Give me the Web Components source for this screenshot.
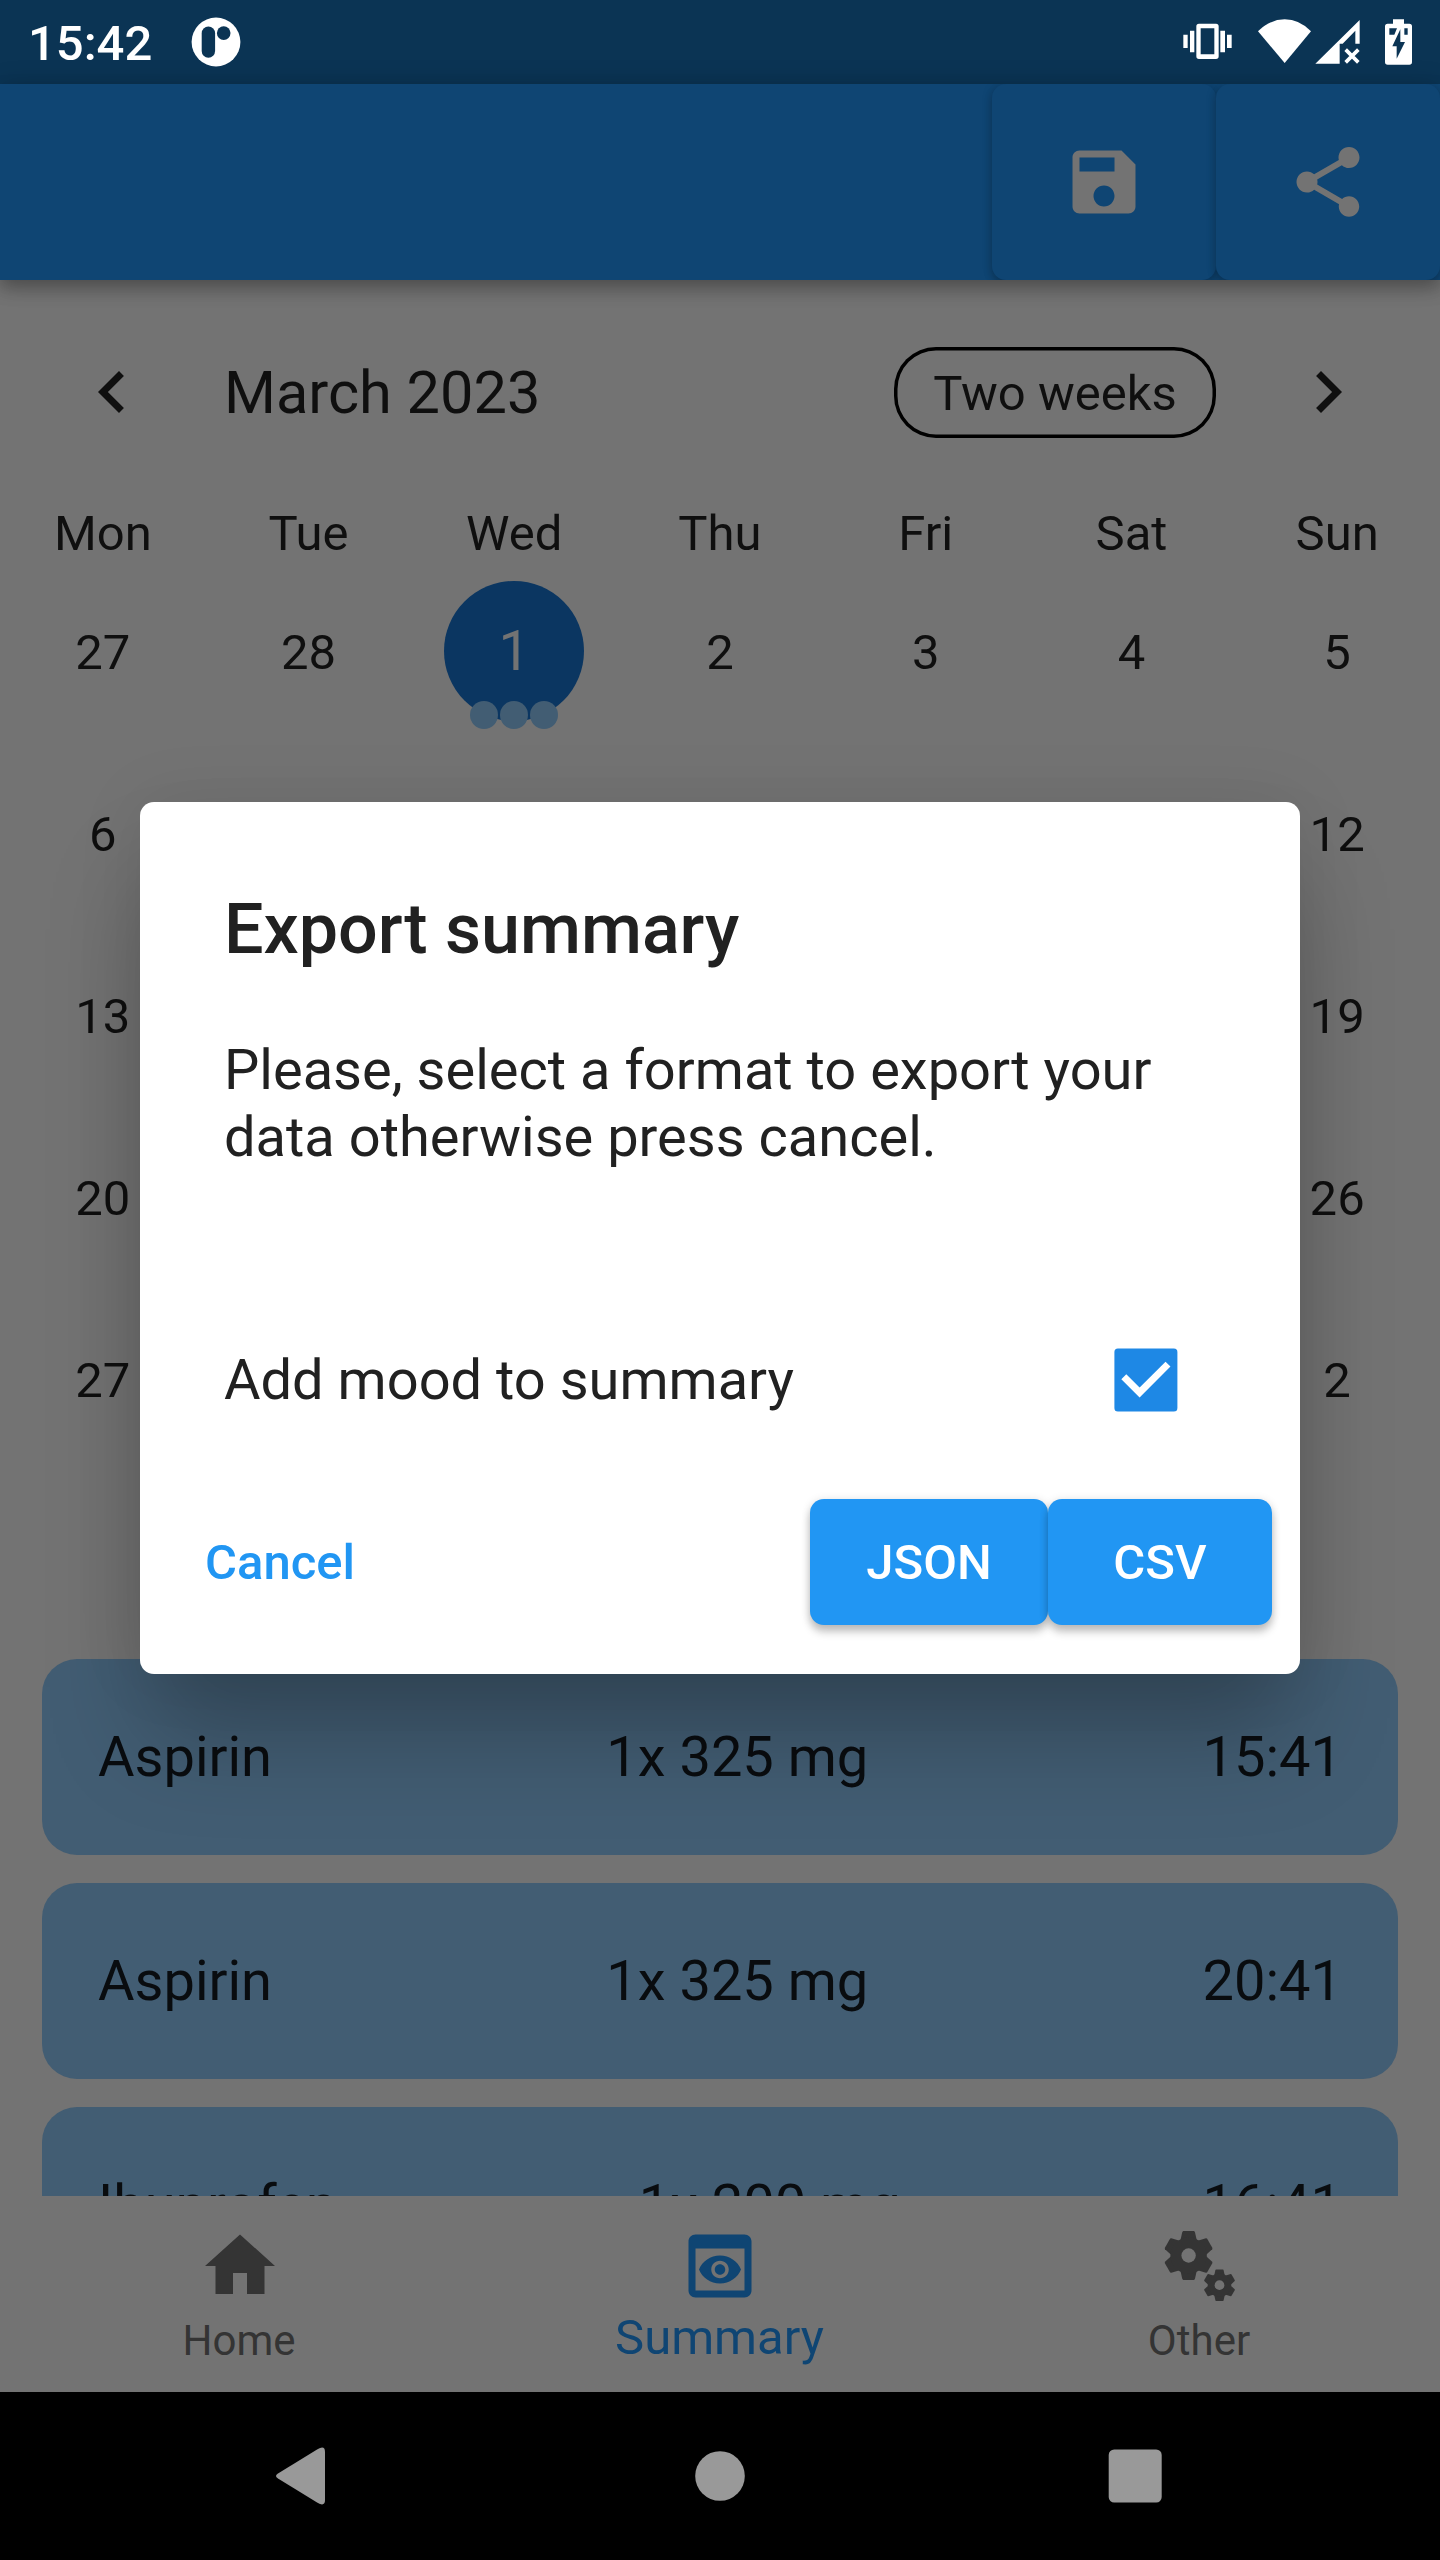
<!DOCTYPE html>
<html lang="en">
<head>
<meta charset="utf-8">
<title>Export summary</title>
<style>
  html, body { margin: 0; background: #000; }
  body { width: 1440px; height: 2560px; overflow: hidden; font-family: Roboto, sans-serif; }
</style>
</head>
<body>
<med-app></med-app>
<script>
const define = (name, html, setup) => customElements.define(name, class extends HTMLElement {
  constructor() {
    super();
    this.attachShadow({ mode: 'open' });
  }
  connectedCallback() {
    this.shadowRoot.innerHTML = typeof html === 'function' ? html(this) : html;
    if (setup) setup(this);
  }
});

// Material glyphs on a 24-unit grid
const ICONS = {
  save: '<path d="M17 3H5c-1.11 0-2 .9-2 2v14c0 1.1.89 2 2 2h14c1.1 0 2-.9 2-2V7l-4-4zm-5 16c-1.66 0-3-1.34-3-3s1.34-3 3-3 3 1.34 3 3-1.34 3-3 3zm3-10H5V5h10v4z"/>',
  share: '<path d="M18 16.08c-.76 0-1.44.3-1.96.77L8.91 12.7c.05-.23.09-.46.09-.7s-.04-.47-.09-.7l7.05-4.11c.54.5 1.25.81 2.04.81 1.66 0 3-1.34 3-3s-1.34-3-3-3-3 1.34-3 3c0 .24.04.47.09.7L8.04 9.81C7.5 9.31 6.79 9 6 9c-1.66 0-3 1.34-3 3s1.34 3 3 3c.79 0 1.5-.31 2.04-.81l7.12 4.16c-.05.21-.08.43-.08.65 0 1.61 1.31 2.92 2.92 2.92s2.92-1.31 2.92-2.92-1.31-2.92-2.92-2.92z"/>',
  left: '<path d="M15.41 7.41L14 6l-6 6 6 6 1.41-1.41L10.83 12z"/>',
  right: '<path d="M10 6L8.59 7.41 13.17 12l-4.58 4.59L10 18l6-6z"/>',
  home: '<path d="M10 20v-6h4v6h5v-8h3L12 3 2 12h3v8z"/>',
  preview: '<path d="M19 3H5c-1.11 0-2 .9-2 2v14c0 1.1.89 2 2 2h14c1.1 0 2-.9 2-2V5c0-1.1-.89-2-2-2zm0 16H5V7h14v12zm-5.5-6c0 .83-.67 1.5-1.5 1.5s-1.5-.67-1.5-1.5.67-1.5 1.5-1.5 1.5.67 1.5 1.5zM12 9c-2.73 0-5.06 1.66-6 4 .94 2.34 3.27 4 6 4s5.06-1.66 6-4c-.94-2.34-3.27-4-6-4zm0 6.5c-1.38 0-2.5-1.12-2.5-2.5s1.12-2.5 2.5-2.5 2.5 1.12 2.5 2.5-1.12 2.5-2.5 2.5z"/>'
};
const gear = (x, y, s, hole) => {
  const tooth = '<path d="M-5.4-24.4H5.4L6.3-23.6 8-16V16L6.3 23.6 5.4 24.4H-5.4L-6.3 23.6-8 16V-16L-6.3-23.6z"';
  return `<g transform="translate(${x} ${y}) scale(${s})">${tooth}/>${tooth} transform="rotate(60)"/>${tooth} transform="rotate(120)"/><circle r="18.2"/><circle r="${hole}" fill="#737373"/></g>`;
};
ICONS.gears = `<g transform="scale(${24 / 84})">${gear(30.6, 31.5, 1, 7.2)}${gear(61.5, 61.2, .645, 7.5)}</g>`;

define('md-icon', el => `
  <style>:host{display:block;width:84px;height:84px;flex:none}svg{display:block;width:84px;height:84px;fill:currentColor}</style>
  <svg viewBox="0 0 24 24">${ICONS[el.getAttribute('name')]}</svg>`);

define('status-bar', `
  <style>
    :host{display:flex;height:84px;background:#0b3454;color:#fff;align-items:center;box-sizing:border-box;padding:0 27px 0 28px}
    .t{font-size:49px;font-weight:500;line-height:58px;margin-top:3px;width:163px;white-space:nowrap}
    svg{display:block;flex:none}
    .r{margin-left:auto}
  </style>
  <div class="t">15:42</div>
  <svg width="50" height="50" viewBox="191.3 17.3 50 50"><circle cx="216.3" cy="42.3" r="24.4" fill="#fff"/><rect x="202" y="26.8" width="13.4" height="31.2" rx="6.7" fill="#0b3454"/><circle cx="224" cy="33.4" r="6.8" fill="#0b3454"/></svg>
  <svg class="r" width="232" height="84" viewBox="663 0 696 252" fill="#fff">
    <path fill-rule="evenodd" d="M717 71h51q8 0 8 8v90q0 8-8 8h-51q-8 0-8-8V79q0-8 8-8zm5 14v78h41V85z"/>
    <path d="M690 92h13v65h-13zM670 104h13v40h-13zM781 92h14v65h-14zM801 104h14v40h-14z"/>
    <path d="M894 94Q930 58 974 58T1053 94L974 189z"/>
    <path d="M1066 191L1199 60V131H1186V92L1148 131H1139V191z"/>
    <path d="M1157 149L1195 187M1195 149L1157 187" stroke="#fff" stroke-width="11"/>
    <path d="M1299 58h33v13h16q8 0 8 8v107q0 8-8 8h-65q-8 0-8-8V79q0-8 8-8h16z"/>
    <path fill="#0b3454" d="M1288 85h23l-8 19h-15zM1333 85h10v19h-10zM1321 88v38h14l-25 50v-37h-13z"/>
  </svg>`);

define('app-bar', `
  <style>
    :host{display:flex;justify-content:flex-end;height:196px;background:#0f4573;position:relative;z-index:1;box-shadow:0 8px 16px rgba(0,0,0,.25),0 2px 26px rgba(0,0,0,.16)}
    .row{display:flex;overflow:hidden;padding-left:30px}
    .b{display:flex;width:224px;align-items:center;justify-content:center;color:#737373;background:#0f4573;border-radius:14px;box-shadow:0 5px 9px rgba(0,0,0,.2),0 0 12px rgba(0,0,0,.12)}
  </style>
  <div class="row"><div class="b"><md-icon name="save"></md-icon></div><div class="b"><md-icon name="share"></md-icon></div></div>`);

define('month-calendar', () => {
  const weeks = [['27', '28', '1', '2', '3', '4', '5'], ['6', , , , , , '12'], ['13', , , , , , '19'], ['20', , , , , , '26'], ['27', , , , , , '2']];
  const cells = weeks.flatMap((w, r) => Array.from({ length: 7 }, (_, c) => r === 0 && c === 2
    ? '<div class="day"><div class="sel">1<div class="dots"><i></i><i></i><i></i></div></div></div>'
    : `<div class="day">${w[c] || ''}</div>`)).join('');
  return `
  <style>
    :host{display:block;color:#0f0f0f;font-size:49px}
    header{display:flex;align-items:center;height:224px;padding:0 70px;box-sizing:border-box}
    .m{font-size:59.5px;margin-left:70px;flex:1;line-height:70px;padding-top:2px}
    .f{box-sizing:border-box;width:322px;height:91px;border-radius:42px;box-shadow:inset 0 0 0 3.5px #000;display:flex;align-items:center;justify-content:center;margin-right:70px;padding-top:2px;white-space:nowrap}
    .g{display:grid;grid-template-columns:repeat(7,1fr);text-align:center}
    .w{height:57px;line-height:60px}
    .day{height:182px;display:flex;align-items:center;justify-content:center}
    .sel{position:relative;width:140px;height:140px;margin-bottom:2px;border-radius:50%;background:#0b3661;color:#737373;font-size:56px;line-height:140px}
    .dots{position:absolute;left:0;right:0;top:120px;display:flex;justify-content:center;gap:2px}
    i{width:28px;height:28px;border-radius:50%;background:#425d73}
  </style>
  <header><md-icon name="left"></md-icon><div class="m">March 2023</div><div class="f">Two weeks</div><md-icon name="right"></md-icon></header>
  <div class="g">${['Mon', 'Tue', 'Wed', 'Thu', 'Fri', 'Sat', 'Sun'].map(d => `<div class="w">${d}</div>`).join('')}${cells}</div>`;
});

define('dose-card', `
  <style>
    :host{display:flex;justify-content:space-between;align-items:center;height:196px;flex:none;box-sizing:border-box;padding:0 56px;border-radius:35px;background:#425d73;color:#090c0f;font-size:56px;white-space:nowrap}
  </style>
  <slot name="drug"></slot><slot name="dose"></slot><slot name="time"></slot>`);

define('nav-item', el => `
  <style>
    :host{display:flex;flex-direction:column;align-items:center;width:480px;color:#343434;font-size:42px;line-height:50px;padding-top:28px}
    :host([active]){color:#0f4573;font-size:49px}
    div{margin-top:8px;padding-right:2px}
    :host([active]) div{margin-top:5px;padding-right:1px}
  </style>
  <md-icon name="${el.getAttribute('icon')}"></md-icon><div><slot></slot></div>`);

define('system-nav', `
  <style>:host{display:flex;height:168px;background:#000}svg{display:block}</style>
  <svg width="1440" height="168" viewBox="0 2392 1440 168" fill="#999">
    <path d="M278 2473.5L317.500 2449.2Q325 2445 325 2452V2500Q325 2507 317.500 2502.800L278 2478.500Q274 2476 278 2473.500z"/>
    <circle cx="720" cy="2476" r="24.8"/><rect x="1108.700" y="2449.500" width="53" height="53" rx="5.500"/>
  </svg>`);

define('export-dialog', `
  <style>
    :host{position:absolute;left:140px;top:802px;width:1160px;height:872px;box-sizing:border-box;padding:86px 28px 0 84px;border-radius:14px;background:#fff;color:#212121;display:flex;flex-direction:column;box-shadow:0 70px 100px -10px rgba(0,0,0,.25),0 0 70px rgba(0,0,0,.08);z-index:5}
    h1{margin:0;font-size:70px;font-weight:500;line-height:82px}
    p{margin:67px 0 0;font-size:56px;line-height:67px;width:992px}
    .c{display:flex;align-items:center;justify-content:space-between;height:128px;margin-top:145px;padding-right:94px;font-size:56px}
    .a{display:flex;align-items:center;height:126px;margin-top:55px;font-size:49px;font-weight:500}
    .x{color:#2196f3;margin-left:-19px;flex:1}
    .b{display:flex;align-items:center;justify-content:center;height:126px;border-radius:14px;background:#2196f3;color:#fff;box-shadow:0 7px 9px rgba(0,0,0,.22),0 1px 10px rgba(0,0,0,.12)}
    .j{width:238px}.v{width:224px}
    svg{display:block;flex:none}
  </style>
  <h1>Export summary</h1>
  <p>Please, select a format to export your data otherwise press cancel.</p>
  <div class="c"><span>Add mood to summary</span>
    <svg width="64" height="64" viewBox="0 0 64 64"><rect x=".4" y=".4" width="63" height="63" rx="3.500" fill="#1e88e5"/><path d="M9.800 28.700L25.600 44.500L54 16.100" fill="none" stroke="#fff" stroke-width="7"/></svg>
  </div>
  <div class="a"><span class="x">Cancel</span><span class="b j">JSON</span><span class="b v">CSV</span></div>`);

define('med-app', `
  <style>
    :host{display:flex;flex-direction:column;position:relative;width:1440px;height:2560px;overflow:hidden}
    main{flex:1;min-height:0;overflow:hidden;background:#737373}
    .list{display:flex;flex-direction:column;gap:28px;padding:188px 42px 0}
    nav{display:flex;justify-content:space-between;height:196px;background:#737373}
  </style>
  <status-bar></status-bar>
  <app-bar></app-bar>
  <main>
    <month-calendar></month-calendar>
    <div class="list">
      <dose-card><span slot="drug">Aspirin</span><span slot="dose">1x 325 mg</span><span slot="time">15:41</span></dose-card>
      <dose-card><span slot="drug">Aspirin</span><span slot="dose">1x 325 mg</span><span slot="time">20:41</span></dose-card>
      <dose-card><span slot="drug">Ibuprofen</span><span slot="dose">1x 200 mg</span><span slot="time">16:41</span></dose-card>
    </div>
  </main>
  <nav><nav-item icon="home">Home</nav-item><nav-item icon="preview" active>Summary</nav-item><nav-item icon="gears">Other</nav-item></nav>
  <system-nav></system-nav>
  <export-dialog></export-dialog>`);
</script>
</body>
</html>
